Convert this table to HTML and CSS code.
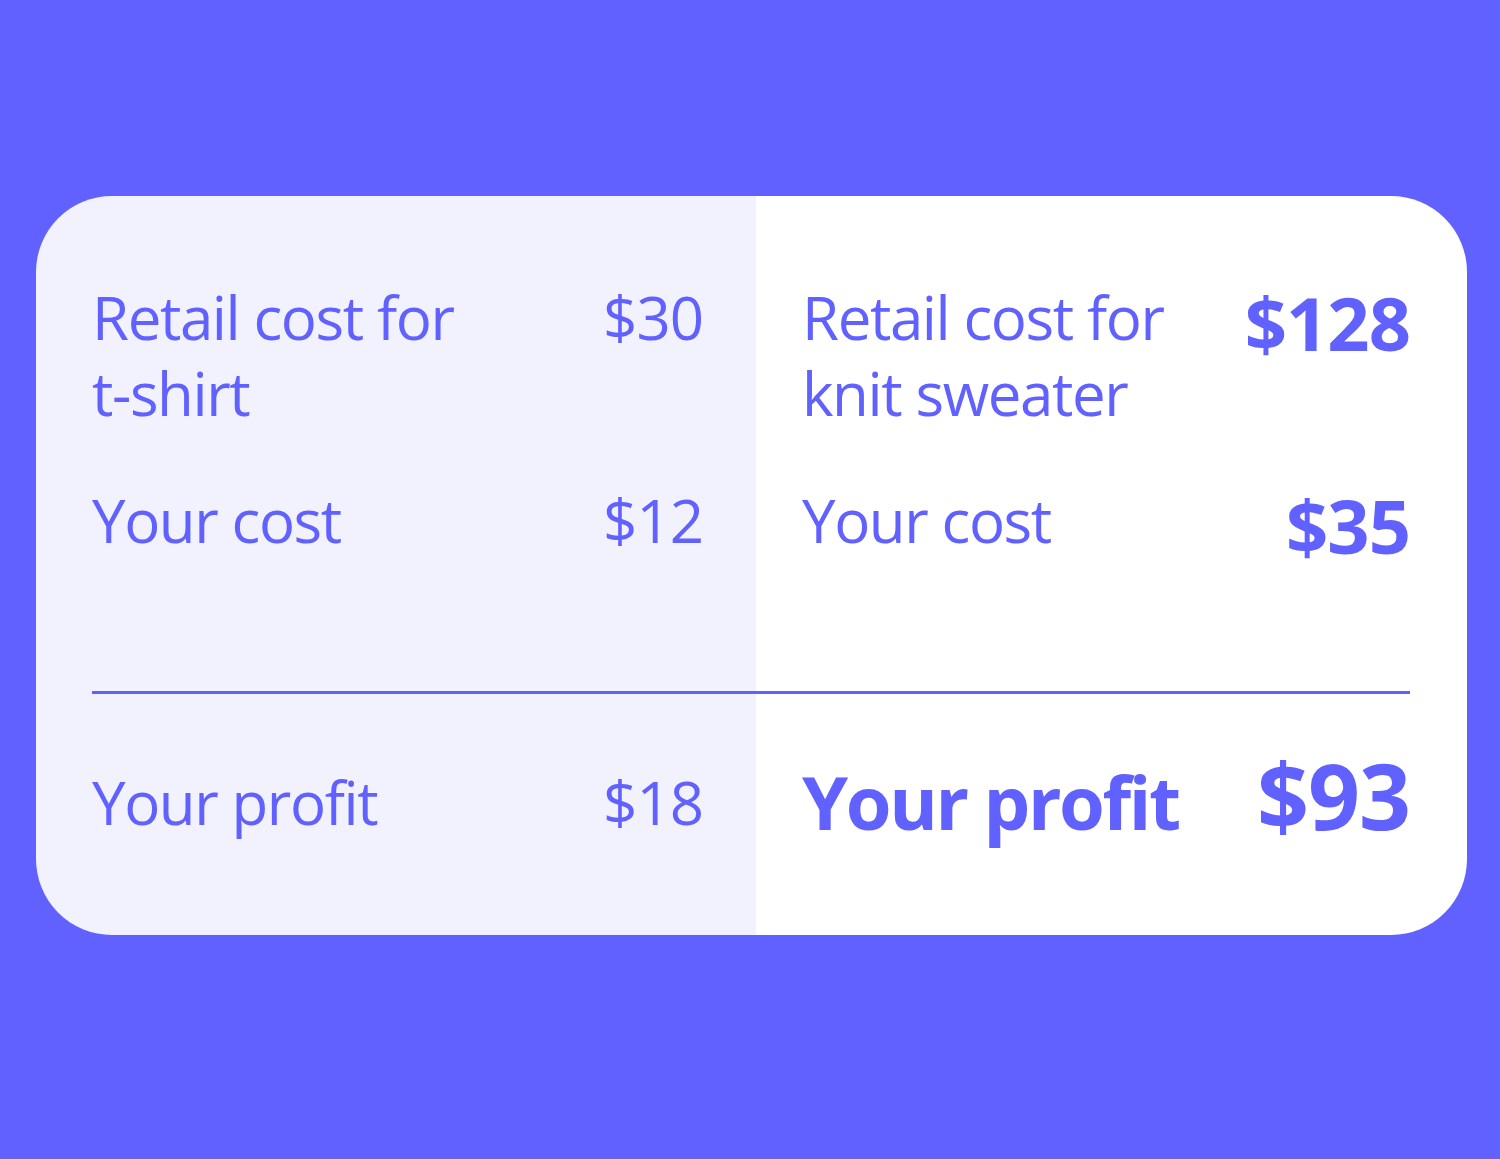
FILE: index.html
```html
<!DOCTYPE html>
<html lang="en">
<head>
<meta charset="utf-8">
<title>Profit comparison</title>
<link rel="stylesheet" href="styles.css">
</head>
<body>
  <main class="card">
    <section class="cell cell-basic">
      <div class="row">
        <span class="label">Retail cost for<br>t-shirt</span>
        <span class="value">$30</span>
      </div>
      <div class="row">
        <span class="label">Your cost</span>
        <span class="value">$12</span>
      </div>
    </section>
    <section class="cell cell-premium">
      <div class="row">
        <span class="label">Retail cost for<br>knit sweater</span>
        <span class="value value-strong">$128</span>
      </div>
      <div class="row">
        <span class="label">Your cost</span>
        <span class="value value-strong">$35</span>
      </div>
    </section>
    <hr class="divider">
    <section class="cell cell-basic">
      <div class="row row-total">
        <span class="label">Your profit</span>
        <span class="value">$18</span>
      </div>
    </section>
    <section class="cell cell-premium">
      <div class="row row-total">
        <span class="label label-strong">Your profit</span>
        <span class="value value-huge">$93</span>
      </div>
    </section>
  </main>
</body>
</html>
```

FILE: styles.css
```css
html, body {
  margin: 0;
  padding: 0;
}

body {
  background: #6161ff;
  width: 1500px;
  height: 1159px;
  padding-top: 196px;
  box-sizing: border-box;
  font-family: "Open Sans", "Noto Sans", sans-serif;
  color: #6161ff;
}

.card {
  margin-left: 36px;
  width: 1431px;
  height: 739px;
  box-sizing: border-box;
  border-radius: 76px;
  background: linear-gradient(to right, #f2f2fe 0, #f2f2fe 720px, #ffffff 720px);
  padding: 83px 57px 0 56px;
  display: grid;
  grid-template-columns: 611px 1fr;
  column-gap: 99px;
  align-content: start;
}

.cell {
  display: flex;
  flex-direction: column;
  gap: 51px;
}

.row {
  display: flex;
  justify-content: space-between;
  align-items: flex-start;
}

.label,
.value {
  font-size: 60px;
  line-height: 76px;
  font-weight: 400;
  white-space: nowrap;
}

.label {
  letter-spacing: -1.4px;
}

.value {
  letter-spacing: -1px;
}

.value-strong {
  font-size: 74px;
  font-weight: 700;
  margin-top: 6px;
  letter-spacing: -1px;
}

.divider {
  grid-column: 1 / -1;
  margin: 127px 0 70px;
  height: 3px;
  border: 0;
  background: #6161ff;
}

.row-total {
  align-items: baseline;
}

.label-strong {
  font-size: 74px;
  font-weight: 700;
  letter-spacing: -2.4px;
}

.value-huge {
  font-size: 91px;
  font-weight: 700;
  line-height: 60px;
  letter-spacing: -1px;
}
```
